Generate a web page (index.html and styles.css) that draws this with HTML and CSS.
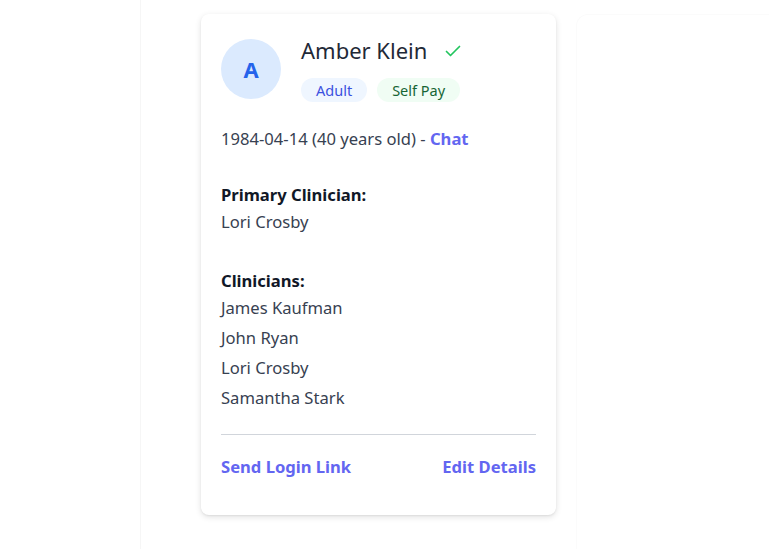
FILE: index.html
```html
<!DOCTYPE html>
<html>
<head>
<meta charset="utf-8">
<link rel="stylesheet" href="styles.css">
</head>
<body>
<div class="page">
  <div class="ghost-line"></div>
  <div class="card">
    <div class="header">
      <div class="avatar">A</div>
      <div class="head-info">
        <div class="name-row">
          <span class="name">Amber Klein</span>
          <svg class="check" width="16" height="16" viewBox="0 0 16 16"><path d="M1.5 8.5 L5.5 12.5 L14.5 3.5" fill="none" stroke="#22c55e" stroke-width="1.7" stroke-linecap="round" stroke-linejoin="round"/></svg>
        </div>
        <div class="badges">
          <span class="badge badge-blue">Adult</span>
          <span class="badge badge-green">Self Pay</span>
        </div>
      </div>
    </div>
    <div class="dob">1984-04-14 (40 years old) - <a class="link">Chat</a></div>
    <div class="section">
      <div class="label">Primary Clinician:</div>
      <div class="item">Lori Crosby</div>
    </div>
    <div class="section">
      <div class="label">Clinicians:</div>
      <div class="item">James Kaufman</div>
      <div class="item">John Ryan</div>
      <div class="item">Lori Crosby</div>
      <div class="item">Samantha Stark</div>
    </div>
    <div class="footer">
      <a class="link">Send Login Link</a>
      <a class="link">Edit Details</a>
    </div>
  </div>
  <div class="ghost-card"></div>
</div>
</body>
</html>
```
FILE: styles.css
```css
* { box-sizing: border-box; }
html, body { margin: 0; padding: 0; background: #ffffff; }
body {
  font-family: "Noto Sans", "Open Sans", sans-serif;
  color: #1f2937;
}
.page {
  width: 769px;
  height: 549px;
  display: flex;
  align-items: flex-start;
  padding-top: 14px;
  position: relative;
  overflow: hidden;
}
.ghost-line {
  width: 1px;
  height: 549px;
  margin-top: -14px;
  margin-left: 140px;
  background: #f6f6f6;
  flex: none;
}
.card {
  margin-left: 60px;
  width: 355px;
  height: 501px;
  background: #fff;
  border-radius: 8px;
  box-shadow: 0 2px 6px rgba(0,0,0,0.12), 0 1px 2px rgba(0,0,0,0.06);
  padding: 25px 20px 0 20px;
  flex: none;
}
.ghost-card {
  margin-left: 20px;
  width: 200px;
  height: 560px;
  border: 1px solid #fbfbfb;
  border-right: none;
  border-radius: 12px 0 0 0;
  flex: none;
}
.header {
  display: flex;
  gap: 20px;
}
.avatar {
  width: 60px;
  height: 60px;
  border-radius: 50%;
  background: #dbeafe;
  color: #2563eb;
  font-weight: 700;
  font-size: 22px;
  display: flex;
  align-items: center;
  justify-content: center;
  flex: none;
}
.head-info { display: flex; flex-direction: column; }
.name-row {
  display: flex;
  align-items: center;
  gap: 18px;
  height: 28px;
  margin-top: -3px;
}
.name { font-size: 22px; color: #1f2937; }
.check { margin-top: 2px; }
.badges { display: flex; gap: 10px; margin-top: 14px; }
.badge {
  height: 24px;
  line-height: 24px;
  padding: 0 15px;
  border-radius: 12px;
  font-size: 14.5px;
}
.badge-blue { background: #eff6ff; color: #3b50e0; }
.badge-green { background: #f0fdf4; color: #166534; }
.dob {
  margin-top: 25px;
  font-size: 16.6px;
  line-height: 24px;
  color: #374151;
}
.link { color: #6366f1; font-weight: 700; text-decoration: none; }
.section { margin-top: 32px; }
.label {
  font-weight: 700;
  font-size: 16.6px;
  line-height: 24px;
  color: #111827;
}
.item {
  font-size: 16.6px;
  line-height: 30px;
  color: #374151;
}
.footer {
  margin-top: 21px;
  border-top: 1px solid #d1d5db;
  padding-top: 20px;
  display: flex;
  justify-content: space-between;
  font-size: 16.6px;
  line-height: 24px;
}
```
